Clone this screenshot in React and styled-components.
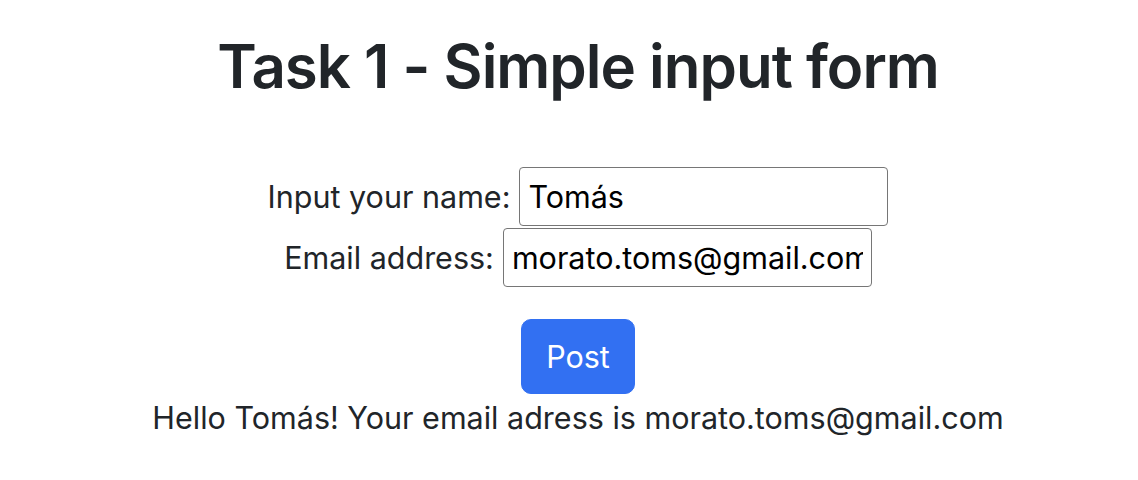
import { useState } from 'react';
import styled, { createGlobalStyle } from 'styled-components';

const GlobalStyle = createGlobalStyle`
  body {
    margin: 0;
    background: #fff;
    color: #212529;
    font-family: Inter, "Noto Sans", sans-serif;
    font-size: 30.5px;
    line-height: 48px;
  }
`;

const Pagina = styled.div`
  text-align: center;
  padding: 30px 0 0 18px;
`;

const Titulo = styled.h1`
  margin: 0 0 65px;
  font-size: 60px;
  font-weight: 600;
  line-height: 72px;
  letter-spacing: -1px;
`;

const Formulario = styled.form`
  display: flex;
  flex-direction: column;
  align-items: center;
`;

const Linha = styled.label`
  display: flex;
  align-items: center;
  gap: 9px;
  margin-bottom: 2px;
`;

const Campo = styled.input`
  width: 369px;
  height: 59px;
  box-sizing: border-box;
  padding: 0 8px;
  border: 1.5px solid #767676;
  border-radius: 4px;
  font-family: inherit;
  font-size: 30.5px;
  color: #000;
  outline: none;
`;

const Botao = styled.button`
  margin-top: 30px;
  padding: 12px 24px;
  border: 1px solid #3270f2;
  border-radius: 10px;
  background: #3270f2;
  color: #fff;
  font-family: inherit;
  font-size: 30.5px;
  line-height: 49px;
`;

const Mensagem = styled.p`
  margin: 0;
`;

export default function App() {
  const [nome, setNome] = useState('Tomás');
  const [email, setEmail] = useState('morato.toms@gmail.com');

  const handleSubmit = (event) => {
    event.preventDefault();
  };

  return (
    <Pagina>
      <GlobalStyle />
      <Titulo>Task 1 - Simple input form</Titulo>
      <Formulario onSubmit={handleSubmit}>
        <Linha>
          Input your name:
          <Campo type="text" value={nome} onChange={(e) => setNome(e.target.value)} />
        </Linha>
        <Linha>
          Email address:
          <Campo type="email" value={email} onChange={(e) => setEmail(e.target.value)} />
        </Linha>
        <Botao type="submit">Post</Botao>
      </Formulario>
      <Mensagem>
        Hello {nome}! Your email adress is {email}
      </Mensagem>
    </Pagina>
  );
}
